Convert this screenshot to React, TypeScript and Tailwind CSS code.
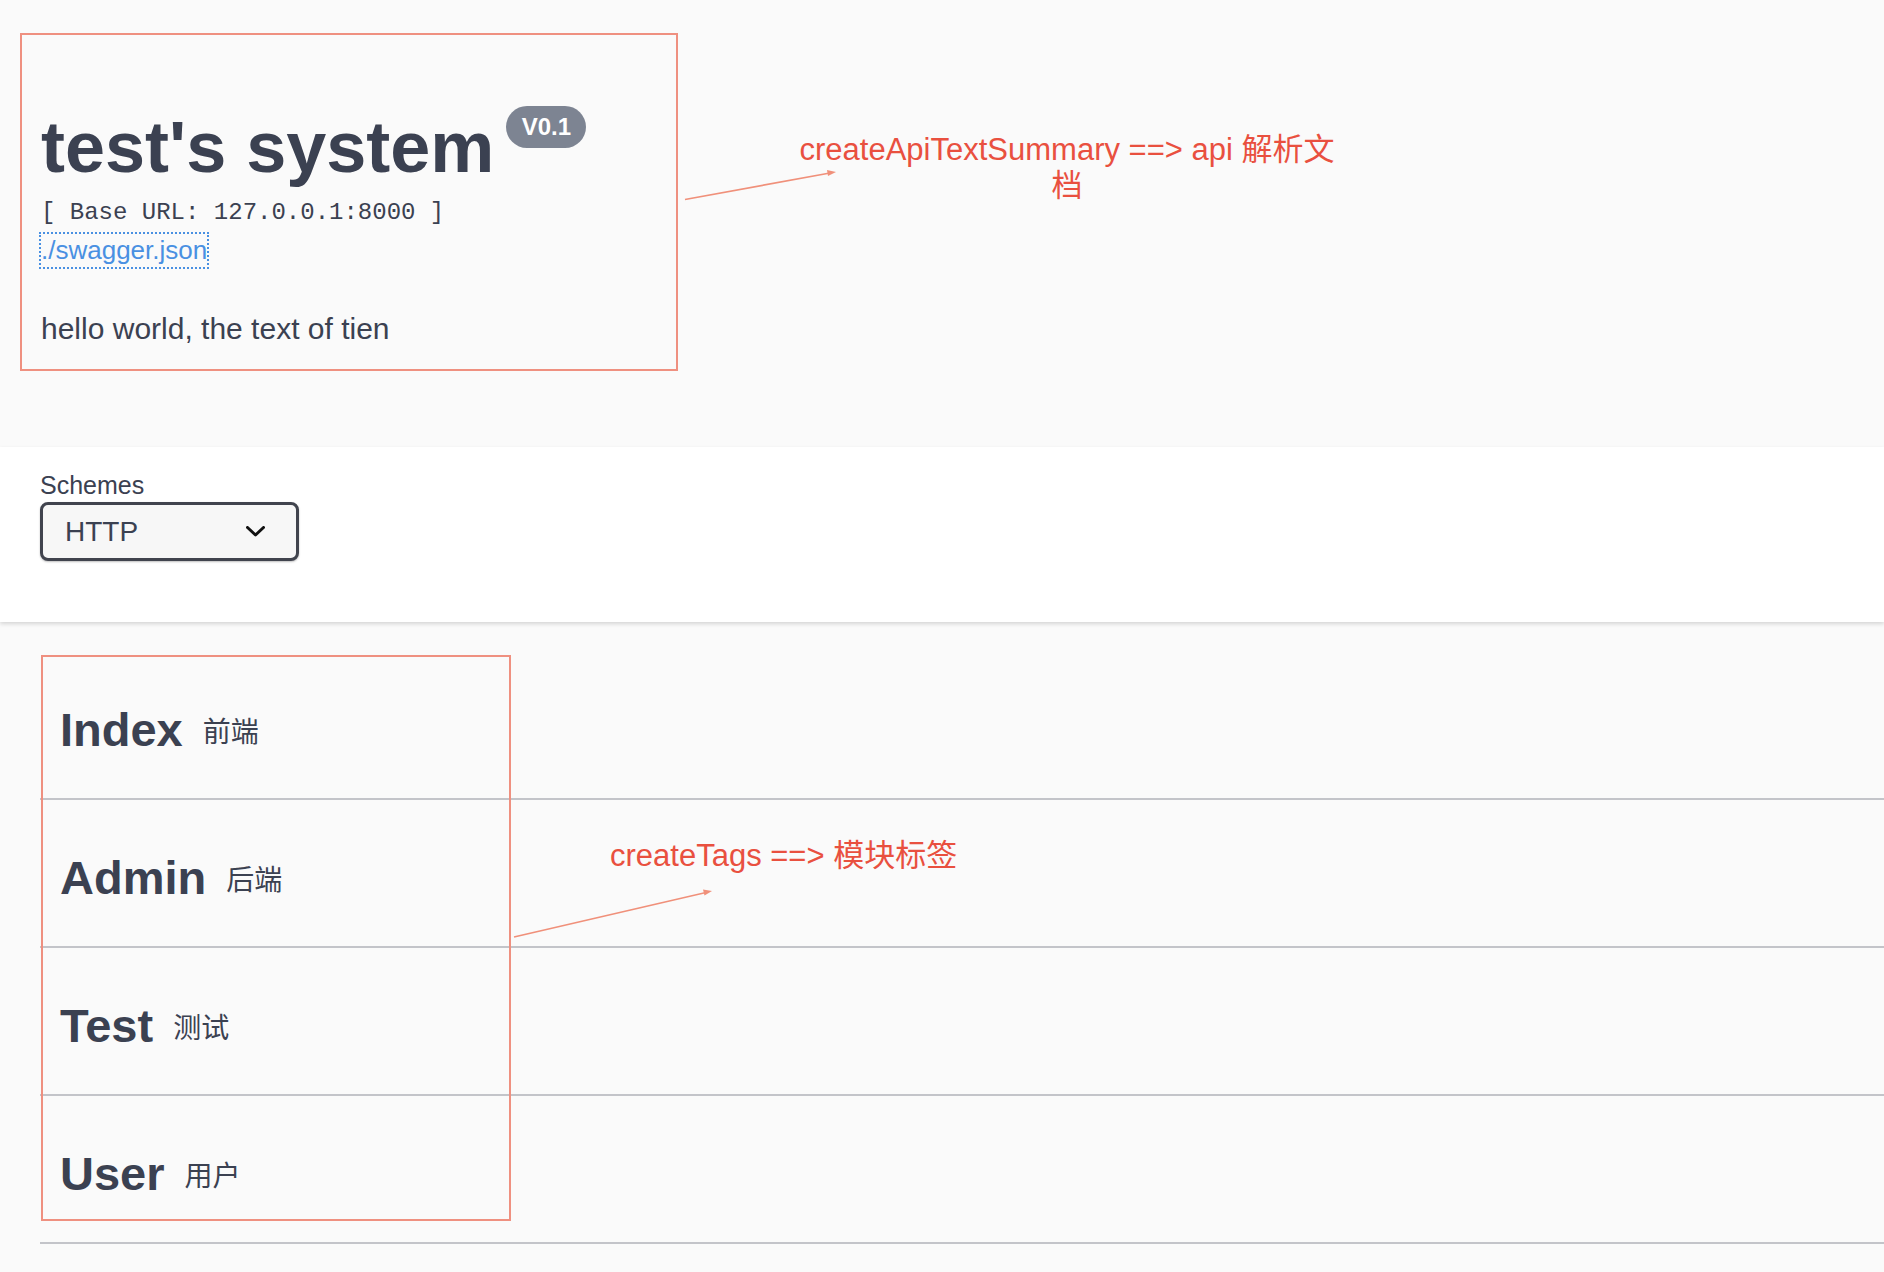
import React from "react";

const tags = [
  { name: "Index", desc: "前端" },
  { name: "Admin", desc: "后端" },
  { name: "Test", desc: "测试" },
  { name: "User", desc: "用户" },
];

export default function App() {
  return (
    <div className="relative min-h-screen bg-[#fafafa] text-[#3b4151] font-['Liberation_Sans','Noto_Sans_CJK_SC',Arial,sans-serif]">
      {/* Info */}
      <div className="pl-[41px] pt-[111px] h-[447px]">
        <div className="flex items-start">
          <h2 className="text-[72px] leading-[72px] font-bold whitespace-nowrap">test's system</h2>
          <span className="ml-[12px] mt-[-5px] flex h-[42px] w-[80px] items-center justify-center rounded-full bg-[#7d8492] text-[24px] font-bold text-white">
            V0.1
          </span>
        </div>
        <div className="mt-[16px] text-[24px] leading-[28px] font-['Liberation_Mono',monospace] whitespace-pre">
          [ Base URL: 127.0.0.1:8000 ]
        </div>
        <a
          href="#"
          className="mt-[7px] inline-block text-[26px] leading-[33px] text-[#4990e2] outline-2 outline-dotted outline-[#4990e2]"
        >
          ./swagger.json
        </a>
        <p className="mt-[44px] text-[30px] leading-[36px]">hello world, the text of tien</p>
      </div>

      {/* Schemes */}
      <div className="h-[175px] bg-white pl-[40px] pt-[24px] shadow-[0_2px_4px_0_rgba(0,0,0,0.15)]">
        <div className="text-[25px] leading-[28px]">Schemes</div>
        <div className="mt-[3px] flex h-[59px] w-[259px] items-center justify-between rounded-[8px] border-[3px] border-[#41444e] bg-[#f7f7f7] pl-[22px] pr-[31px] shadow-[0_1px_2px_0_rgba(0,0,0,0.25)]">
          <span className="text-[28px] font-normal">HTTP</span>
          <svg width="19" height="11" viewBox="0 0 19 11" fill="none">
            <path d="M1.5 1.5 L9.5 9 L17.5 1.5" stroke="#111" strokeWidth="3" strokeLinecap="round" strokeLinejoin="round" />
          </svg>
        </div>
      </div>

      {/* Tags */}
      <div className="pl-[40px] pt-[40px]">
        {tags.map((t) => (
          <h4
            key={t.name}
            className="mb-[10px] flex h-[138px] items-center border-b-2 border-[#c3c4c9] pl-[20px]"
          >
            <span className="text-[47px] font-bold">{t.name}</span>
            <small className="pl-[20px] text-[28px] font-normal font-['Noto_Sans_CJK_SC',sans-serif]">{t.desc}</small>
          </h4>
        ))}
      </div>

      {/* Annotations */}
      <div className="pointer-events-none absolute left-[20px] top-[33px] h-[338px] w-[658px] border-2 border-[#ef9080]" />
      <div className="pointer-events-none absolute left-[41px] top-[655px] h-[566px] w-[470px] border-2 border-[#ef9080]" />

      <div className="absolute left-[767px] top-[132px] w-[600px] text-center text-[31px] leading-[36px] text-[#e9503f] whitespace-nowrap">
        createApiTextSummary ==&gt; api 解析文
        <br />档
      </div>
      <div className="absolute left-[610px] top-[838px] text-[31px] leading-[36px] text-[#e9503f] whitespace-nowrap">
        createTags ==&gt; 模块标签
      </div>

      <svg className="pointer-events-none absolute left-0 top-0" width="1884" height="1272">
        <line x1="685" y1="199.5" x2="830" y2="173" stroke="#f0907a" strokeWidth="1.6" />
        <polygon points="836,172 827,170 828,176" fill="#f0907a" />
        <line x1="514" y1="937" x2="706" y2="892.5" stroke="#f0907a" strokeWidth="1.6" />
        <polygon points="712,891 703,889.5 704.5,895.5" fill="#f0907a" />
      </svg>
    </div>
  );
}
